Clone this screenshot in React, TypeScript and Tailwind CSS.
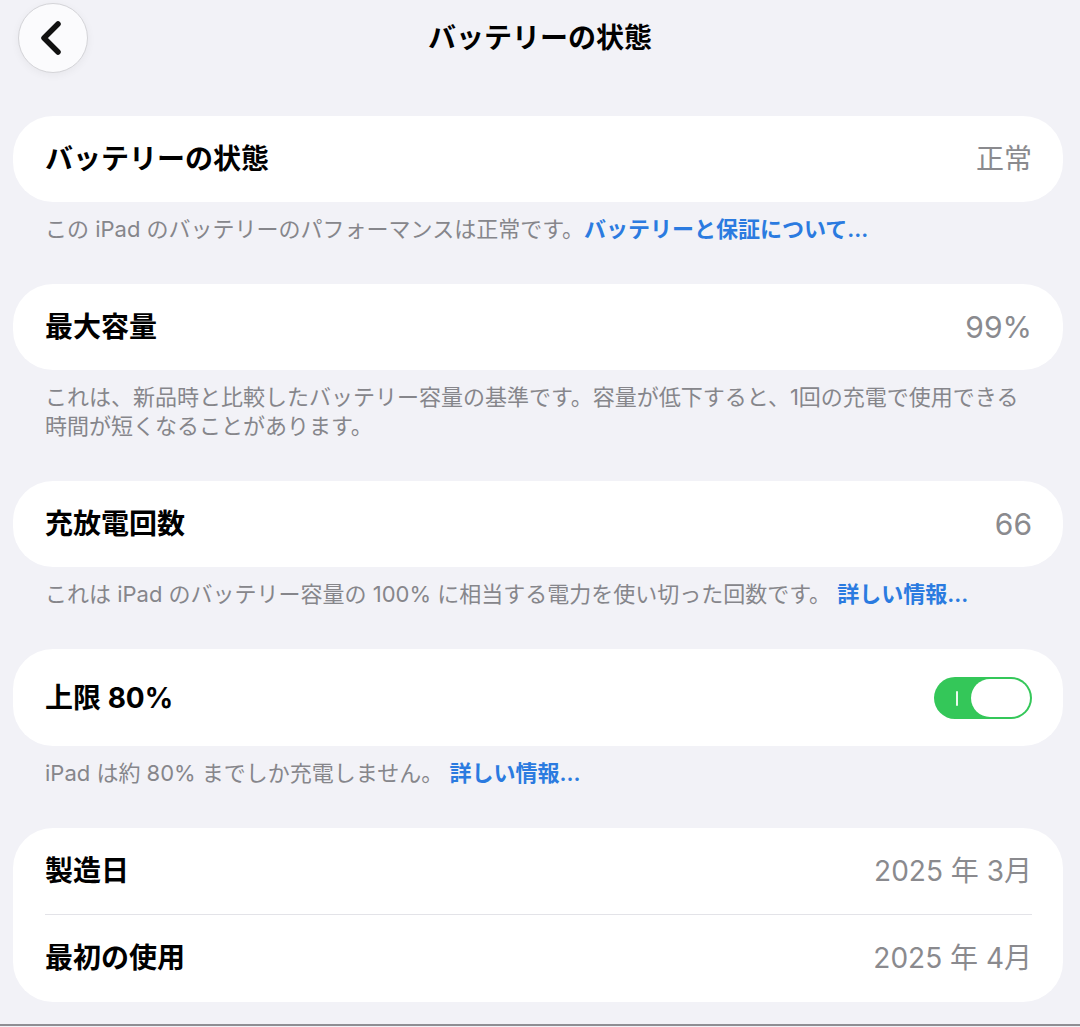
import React from 'react';

const font = { fontFamily: 'Inter, "Noto Sans CJK JP", sans-serif' };

function Card({ children }: { children: React.ReactNode }) {
  return <div className="ml-[13px] mr-[17px] rounded-[40px] bg-white">{children}</div>;
}

function Row({ label, value, latin, right }: { label: string; value?: string; latin?: boolean; right?: React.ReactNode }) {
  return (
    <div className="flex h-[86px] items-center justify-between pl-[32px] pr-[31px]">
      <span className="text-[28px] font-bold text-black">{label}</span>
      {right ?? (
        <span className={latin ? 'text-[30px] text-[#8a8a8e]' : 'text-[28px] text-[#8a8a8e]'}>{value}</span>
      )}
    </div>
  );
}

function Note({ children }: { children: React.ReactNode }) {
  return (
    <div className="px-[45px] pt-[13px] pb-[40px] text-[22px] leading-[29px] text-[#86868b]">
      {children}
    </div>
  );
}

function Link({ children }: { children: React.ReactNode }) {
  return <span className="font-semibold text-[#2b7be0]">{children}</span>;
}

function Toggle() {
  return (
    <div className="relative h-[42px] w-[98px] rounded-full bg-[#34c759]">
      <div className="absolute left-[22px] top-[14px] h-[15px] w-[2px] rounded bg-white/90" />
      <div className="absolute right-[2px] top-[2px] h-[38px] w-[59px] rounded-full bg-white" />
    </div>
  );
}

export default function App() {
  return (
    <div className="min-h-[1027px] w-[1080px] bg-[#f2f2f7]" style={font}>
      <header className="relative flex h-[116px] justify-center">
        <button className="absolute left-[18px] top-[3px] flex h-[70px] w-[70px] items-center justify-center rounded-full border border-[#d4d4d8] bg-[#fbfbfd] shadow-[0_2px_8px_rgba(0,0,0,0.05)]">
          <svg width="30" height="36" viewBox="0 0 30 36" fill="none">
            <path d="M20 4 L6 18 L20 32" stroke="#111" strokeWidth="5.5" strokeLinecap="round" strokeLinejoin="round" />
          </svg>
        </button>
        <h1 className="mt-[20px] text-[28px] font-bold leading-[36px] text-black">バッテリーの状態</h1>
      </header>

      <Card>
        <Row label="バッテリーの状態" value="正常" />
      </Card>
      <Note>
        この iPad のバッテリーのパフォーマンスは正常です。<Link>バッテリーと保証について...</Link>
      </Note>

      <Card>
        <Row label="最大容量" value="99%" latin />
      </Card>
      <Note>
        これは、新品時と比較したバッテリー容量の基準です。容量が低下すると、1回の充電で使用できる
        <br />
        時間が短くなることがあります。
      </Note>

      <Card>
        <Row label="充放電回数" value="66" latin />
      </Card>
      <Note>
        これは iPad のバッテリー容量の 100% に相当する電力を使い切った回数です。 <Link>詳しい情報...</Link>
      </Note>

      <Card>
        <div className="flex h-[97px] items-center justify-between pl-[32px] pr-[31px]">
          <span className="text-[28px] font-bold text-black">上限 80%</span>
          <Toggle />
        </div>
      </Card>
      <Note>
        iPad は約 80% までしか充電しません。 <Link>詳しい情報...</Link>
      </Note>

      <Card>
        <Row label="製造日" value="2025 年 3月" />
        <div className="ml-[32px] mr-[31px] h-[1px] bg-[#e3e3e8]" />
        <div className="h-[87px]">
          <Row label="最初の使用" value="2025 年 4月" />
        </div>
      </Card>
      <div className="h-[22px]" />
      <div className="h-[2px] bg-[#8e8e93]" />
    </div>
  );
}
